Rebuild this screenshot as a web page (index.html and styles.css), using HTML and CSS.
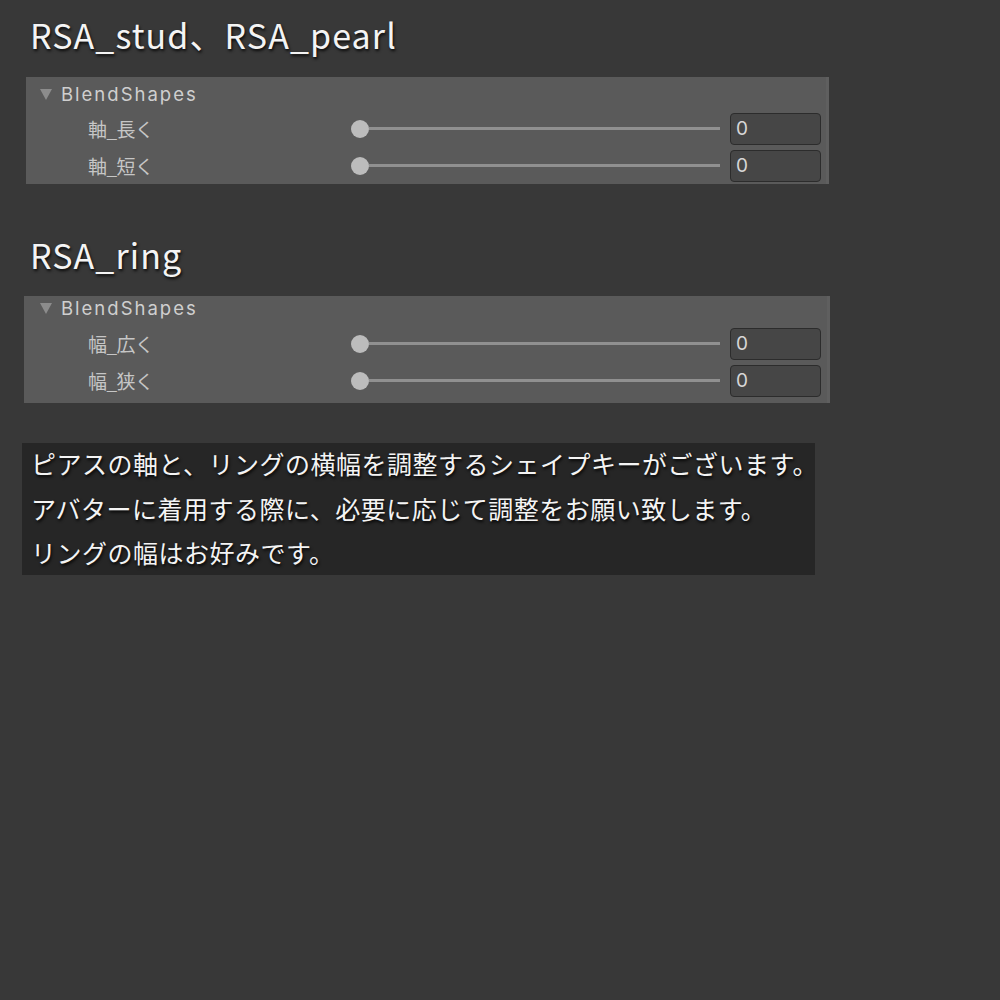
FILE: index.html
```html
<!DOCTYPE html>
<html lang="ja">
<head>
<meta charset="utf-8">
<title>BlendShapes</title>
<link rel="stylesheet" href="styles.css">
</head>
<body>
<div class="page">
  <h1 class="title">RSA_stud、RSA_pearl</h1>
  <div class="panel">
    <div class="header">
      <svg class="tri" width="12" height="12" viewBox="0 0 12 12"><path d="M0 1 L12 1 L6 12 Z" fill="#8c8c8c"/></svg>
      <span class="header-text">BlendShapes</span>
    </div>
    <div class="row">
      <span class="label">軸_長く</span>
      <div class="slider"><span class="knob"></span><span class="track"></span></div>
      <div class="input">0</div>
    </div>
    <div class="row">
      <span class="label">軸_短く</span>
      <div class="slider"><span class="knob"></span><span class="track"></span></div>
      <div class="input">0</div>
    </div>
  </div>

  <h1 class="title title-2">RSA_ring</h1>
  <div class="panel panel-2">
    <div class="header">
      <svg class="tri" width="12" height="12" viewBox="0 0 12 12"><path d="M0 1 L12 1 L6 12 Z" fill="#8c8c8c"/></svg>
      <span class="header-text">BlendShapes</span>
    </div>
    <div class="row">
      <span class="label">幅_広く</span>
      <div class="slider"><span class="knob"></span><span class="track"></span></div>
      <div class="input">0</div>
    </div>
    <div class="row">
      <span class="label">幅_狭く</span>
      <div class="slider"><span class="knob"></span><span class="track"></span></div>
      <div class="input">0</div>
    </div>
  </div>

  <div class="note">
    <div class="note-text">
      <p>ピアスの軸と、リングの横幅を調整するシェイプキーがございます。</p>
      <p>アバターに着用する際に、必要に応じて調整をお願い致します。</p>
      <p>リングの幅はお好みです。</p>
    </div>
  </div>
</div>
</body>
</html>
```

FILE: styles.css
```css
* { box-sizing: border-box; }
html, body {
  margin: 0;
  padding: 0;
  background: #383838;
}
body {
  font-family: "Noto Sans CJK JP", "Noto Sans", sans-serif;
  width: 1000px;
  height: 1000px;
}
.page {
  padding-top: 13px;
}
.title {
  margin: 0 0 0 30px;
  font-size: 34px;
  font-weight: 400;
  line-height: 44px;
  letter-spacing: 1.1px;
  color: #f4f4f4;
  text-shadow: 1px 2px 3px rgba(0, 0, 0, 0.85);
}
.title-2 {
  margin-top: 49px;
}
.panel {
  margin: 20px 0 0 26px;
  width: 803px;
  height: 107px;
  background: #5a5a5a;
  border-right: 3px solid #5f5f5f;
}
.panel-2 {
  margin: 19px 0 0 24px;
  width: 806px;
  padding-left: 2px;
}
.header {
  height: 33px;
  display: flex;
  align-items: center;
  padding-left: 14px;
}
.panel-2 .header {
  height: 29px;
  padding-bottom: 5px;
}
.tri {
  display: block;
  margin-right: 9px;
}
.header-text {
  font-family: Inter, "Noto Sans", sans-serif;
  font-size: 18.5px;
  letter-spacing: 2px;
  color: #cfcfcf;
}
.row {
  height: 37px;
  display: flex;
  align-items: center;
}
.label {
  margin-left: 62px;
  width: 263px;
  font-size: 19px;
  color: #c6c6c6;
  letter-spacing: -0.5px;
}
.slider {
  width: 369px;
  display: flex;
  align-items: center;
}
.knob {
  width: 18px;
  height: 18px;
  border-radius: 50%;
  background: #bcbcbc;
  flex: none;
}
.track {
  flex: 1;
  height: 3px;
  background: #909090;
}
.input {
  margin-left: 10px;
  width: 91px;
  height: 32px;
  background: #464646;
  border: 1px solid #2c2c2c;
  border-radius: 4px;
  padding-left: 5px;
  font-family: Inter, "Noto Sans", sans-serif;
  font-size: 19px;
  line-height: 30px;
  color: #d6d6d6;
}
.note {
  display: flow-root;
  margin: 40px 0 0 22px;
  width: 793px;
  height: 132px;
  background: #262626;
  padding-left: 9px;
}
.note-text {
  margin-top: -2px;
}
.note p {
  margin: 0;
  font-size: 25px;
  line-height: 44.5px;
  letter-spacing: 0.5px;
  color: #f4f4f4;
  white-space: nowrap;
  text-shadow: 1px 2px 3px rgba(0, 0, 0, 0.9);
}
```
